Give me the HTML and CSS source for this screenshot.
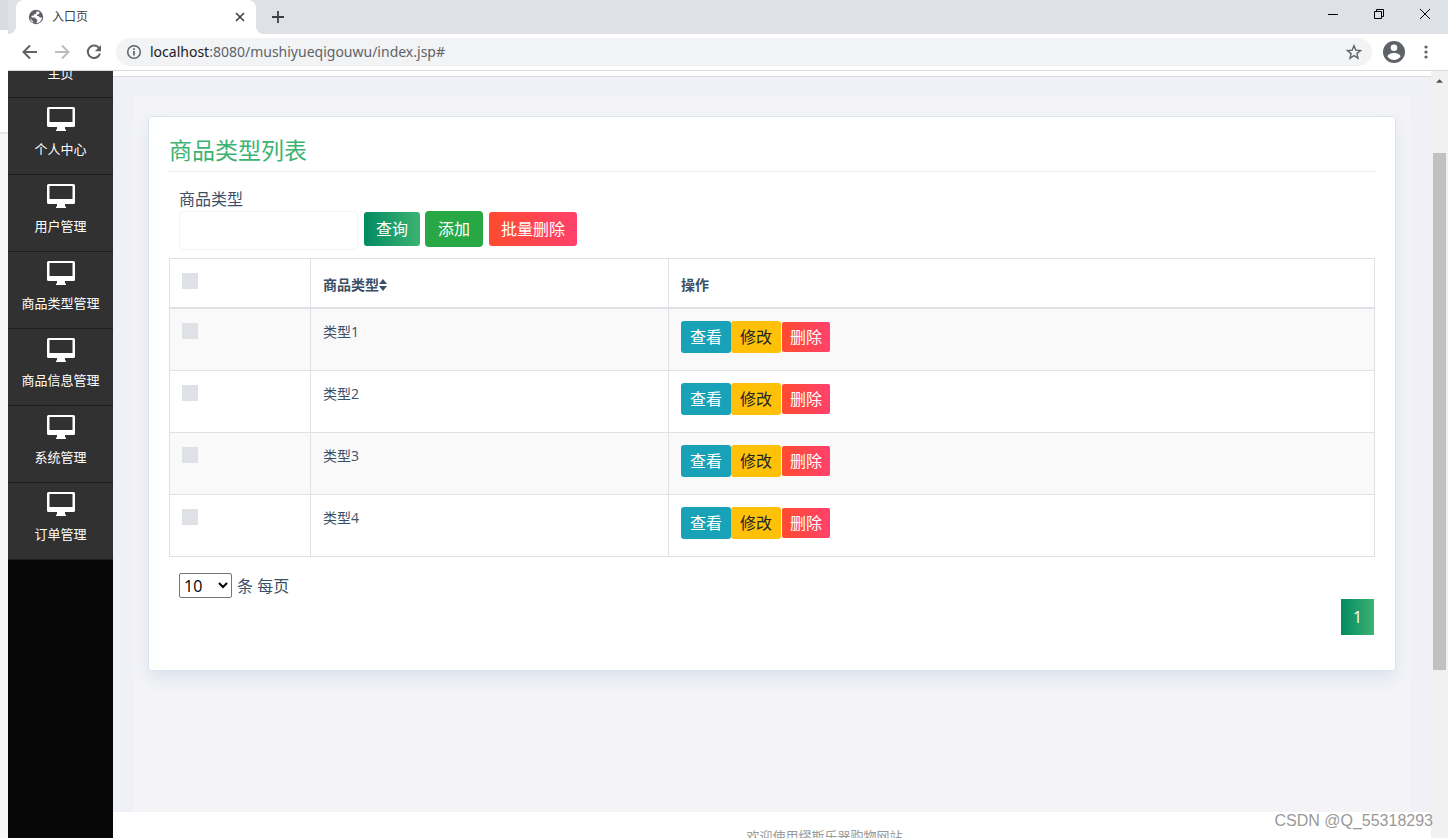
FILE: index.html
```html
<!DOCTYPE html>
<html lang="zh-CN">
<head>
<meta charset="utf-8">
<title>入口页</title>
<link rel="stylesheet" href="styles.css">
</head>
<body>
<svg class="defs" aria-hidden="true">
  <symbol id="monitor" viewBox="0 0 28 24">
    <path fill="currentColor" fill-rule="evenodd" d="M1.500 0h25A1.500 1.500 0 0 1 28 1.500v17a1.500 1.500 0 0 1-1.500 1.500H18v2l1 1v1H9v-1l1-1v-2H1.500A1.500 1.500 0 0 1 0 18.500v-17A1.500 1.500 0 0 1 1.500 0zM2.500 2v13h23V2z"/>
  </symbol>
</svg>
<div class="backdrop"><div class="backdrop-top"></div><div class="backdrop-page"></div><div class="backdrop-body"></div></div>
<div class="window">
  <header class="tabstrip">
    <div class="tab">
      <svg class="favicon" viewBox="0 0 16 16"><circle cx="8" cy="8" r="7.200" fill="#5f6368"/><path fill="#fff" d="M9.500 2.200c-1 .3-1.400 1-1.200 1.800.3.800-.6 1.200-1.600 1.200-.8 0-.9.500-.7 1.300H4.500L3 8c1 .8 2 .5 3.300.6 1.100.2 1.500.9 1.500 1.600h1.500l-.2 2.600-.9 1.200c3.200 0 5.600-2.500 5.700-5.600h-2.300c-.5-1.300-1.300-1.600-2.500-1.500l-.2-1.300c1.500 0 2.500-.5 2.500-1.600V3.200zM2.200 9.600l2.900 2.900.1 1.200C3.500 13 2.400 11.500 2.200 9.600z"/></svg>
      <span class="tab-title">入口页</span>
      <button class="icon-btn tab-close" aria-label="关闭标签页"><svg width="10" height="10" viewBox="0 0 10 10"><path d="M1 1l8 8M9 1L1 9" stroke="#3c4043" stroke-width="1.600"/></svg></button>
    </div>
    <button class="icon-btn new-tab" aria-label="新标签页"><svg width="12" height="12" viewBox="0 0 12 12"><path d="M6 0v12M0 6h12" stroke="#3c4043" stroke-width="1.800"/></svg></button>
    <div class="window-controls">
      <button class="icon-btn" aria-label="最小化"><svg width="10" height="10" viewBox="0 0 10 10"><path d="M0 5.500h10" stroke="#000"/></svg></button>
      <button class="icon-btn" aria-label="还原"><svg width="10" height="10" viewBox="0 0 10 10"><path d="M.5 2.500h7v7h-7zM2.500 2.500v-2h7v7h-2" fill="none" stroke="#000"/></svg></button>
      <button class="icon-btn" aria-label="关闭"><svg width="10" height="10" viewBox="0 0 10 10"><path d="M0 0l10 10M10 0L0 10" stroke="#000"/></svg></button>
    </div>
  </header>
  <div class="toolbar">
    <button class="icon-btn nav" aria-label="后退"><svg width="16" height="16" viewBox="0 0 16 16"><path d="M15 8H2M8 1.500L1.500 8 8 14.500" fill="none" stroke="#5f6368" stroke-width="2"/></svg></button>
    <button class="icon-btn nav" aria-label="前进"><svg width="16" height="16" viewBox="0 0 16 16"><path d="M1 8h13M8 1.500L14.500 8 8 14.500" fill="none" stroke="#babcbe" stroke-width="2"/></svg></button>
    <button class="icon-btn nav" aria-label="刷新"><svg width="16" height="16" viewBox="0 0 16 16"><path d="M13.300 4.500A6.200 6.200 0 1 0 14 9.500" fill="none" stroke="#5f6368" stroke-width="2"/><path d="M15 1v6.200H8.800z" fill="#5f6368"/></svg></button>
    <div class="address">
      <svg width="16" height="16" viewBox="0 0 16 16"><circle cx="8" cy="8" r="6.300" fill="none" stroke="#5f6368" stroke-width="1.500"/><path d="M8 7v4.500M8 4.300v1.700" stroke="#5f6368" stroke-width="1.700"/></svg>
      <span class="url"><span class="host">localhost</span>:8080/mushiyueqigouwu/index.jsp#</span>
      <button class="icon-btn star" aria-label="收藏"><svg width="16" height="16" viewBox="0 0 16 16"><path d="M8 1.800l1.800 4.300 4.700.4-3.600 3.100 1.100 4.600L8 11.700l-4 2.500 1.100-4.600-3.600-3.100 4.700-.4z" fill="none" stroke="#5f6368" stroke-width="1.400"/></svg></button>
    </div>
    <button class="icon-btn profile" aria-label="个人资料"><svg width="22" height="22" viewBox="0 0 22 22"><circle cx="11" cy="11" r="11" fill="#5f6368"/><circle cx="11" cy="6.700" r="3.300" fill="#fff"/><path d="M4.500 15.500c0-2.200 3.800-3.500 6.500-3.500s6.500 1.300 6.500 3.500C16 17.800 13.600 19 11 19s-5-1.200-6.500-3.500z" fill="#fff"/></svg></button>
    <button class="icon-btn menu" aria-label="菜单"><svg width="4" height="14" viewBox="0 0 4 14" fill="#5f6368"><circle cx="2" cy="2" r="1.600"/><circle cx="2" cy="7" r="1.600"/><circle cx="2" cy="12" r="1.600"/></svg></button>
  </div>
  <div class="viewport">
    <nav class="sidebar">
      <a class="side-item side-home" href="#">主页</a>
      <a class="side-item" href="#"><svg class="monitor"><use href="#monitor"/></svg>个人中心</a>
      <a class="side-item" href="#"><svg class="monitor"><use href="#monitor"/></svg>用户管理</a>
      <a class="side-item" href="#"><svg class="monitor"><use href="#monitor"/></svg>商品类型管理</a>
      <a class="side-item" href="#"><svg class="monitor"><use href="#monitor"/></svg>商品信息管理</a>
      <a class="side-item" href="#"><svg class="monitor"><use href="#monitor"/></svg>系统管理</a>
      <a class="side-item" href="#"><svg class="monitor"><use href="#monitor"/></svg>订单管理</a>
    </nav>
    <div class="page">
      <div class="page-top"></div>
      <main class="content">
        <div class="panel">
          <section class="card">
            <h1 class="card-title">商品类型列表</h1>
            <form class="search">
              <label class="search-label" for="type-name">商品类型</label>
              <div class="search-row">
                <input class="search-input" id="type-name" type="text">
                <button class="btn btn-query" type="button">查询</button>
                <button class="btn btn-add" type="button">添加</button>
                <button class="btn btn-danger" type="button">批量删除</button>
              </div>
            </form>
            <table class="list">
              <colgroup><col class="col-check"><col class="col-type"><col></colgroup>
              <thead>
                <tr><th><input class="check" type="checkbox" aria-label="全选"></th><th>商品类型<svg class="sort" viewBox="0 0 8 12"><path d="M4 0l4 5H0zM4 12L0 7h8z" fill="currentColor"/></svg></th><th>操作</th></tr>
              </thead>
              <tbody>
                <tr><td><input class="check" type="checkbox" aria-label="选择类型1"></td><td>类型1</td><td><div class="actions"><button class="sm sm-view">查看</button><button class="sm sm-edit">修改</button><button class="sm sm-del">删除</button></div></td></tr>
                <tr><td><input class="check" type="checkbox" aria-label="选择类型2"></td><td>类型2</td><td><div class="actions"><button class="sm sm-view">查看</button><button class="sm sm-edit">修改</button><button class="sm sm-del">删除</button></div></td></tr>
                <tr><td><input class="check" type="checkbox" aria-label="选择类型3"></td><td>类型3</td><td><div class="actions"><button class="sm sm-view">查看</button><button class="sm sm-edit">修改</button><button class="sm sm-del">删除</button></div></td></tr>
                <tr><td><input class="check" type="checkbox" aria-label="选择类型4"></td><td>类型4</td><td><div class="actions"><button class="sm sm-view">查看</button><button class="sm sm-edit">修改</button><button class="sm sm-del">删除</button></div></td></tr>
              </tbody>
            </table>
            <div class="page-size">
              <select class="size-select" id="size"><option>10</option><option>25</option></select>
              <label for="size">条 每页</label>
            </div>
            <div class="pager"><a class="page-link" href="#">1</a></div>
          </section>
        </div>
      </main>
      <footer class="footer">欢迎使用缪斯乐器购物网站</footer>
    </div>
    <div class="scrollbar"><svg class="scroll-up" viewBox="0 0 8 4"><path d="M4 0l4 4H0z" fill="#505050"/></svg><div class="thumb"></div></div>
  </div>
</div>
<div class="watermark">CSDN @Q_55318293</div>
</body>
</html>
```
FILE: styles.css
```css
* { box-sizing: border-box; }
body {
  margin: 0;
  height: 100vh;
  display: flex;
  overflow: hidden;
  background: #fff;
  color: #3b4f67;
  font: 16px/24px "Open Sans", "Noto Sans CJK SC", sans-serif;
}
button, input, select { font: inherit; }
a { text-decoration: none; }
.defs { position: absolute; width: 0; height: 0; }

.backdrop { width: 8px; display: flex; flex-direction: column; }
.backdrop-top { height: 30px; background: #d9dce1; }
.backdrop-page { height: 102px; background: #fff; }
.backdrop-body { flex: 1; background: #f5f7f9; border-top: 2px solid #e4e6e8; }

.window { flex: 1; min-width: 0; display: flex; flex-direction: column; }
.icon-btn {
  display: flex;
  align-items: center;
  justify-content: center;
  padding: 0;
  border: 0;
  background: none;
}
.tabstrip { height: 34px; flex: none; display: flex; align-items: center; padding-left: 8px; background: #dee1e6; }
.tab {
  position: relative;
  width: 240px;
  height: 34px;
  display: flex;
  align-items: center;
  padding: 0 11px 0 12px;
  background: #fff;
  border-radius: 8px 8px 0 0;
}
.tab::before, .tab::after { content: ""; position: absolute; bottom: 0; width: 8px; height: 8px; }
.tab::before { left: -8px; background: radial-gradient(circle at 0 0, #dee1e6 8px, #fff 8px); }
.tab::after { right: -8px; background: radial-gradient(circle at 100% 0, #dee1e6 8px, #fff 8px); }
.favicon { width: 16px; height: 16px; margin-right: 8px; }
.tab-title { flex: 1; font-size: 12px; color: #3c4043; }
.new-tab { margin-left: 16px; }
.window-controls { display: flex; align-self: flex-start; margin-left: auto; }
.window-controls .icon-btn { width: 46px; height: 28px; }

.toolbar { height: 37px; flex: none; display: flex; align-items: center; padding: 0 20px 0 14px; background: #fff; border-bottom: 1px solid #d8dadd; }
.nav { width: 16px; margin-right: 16px; }
.nav:nth-child(3) { margin-right: 14px; }
.address {
  flex: 1;
  height: 28px;
  display: flex;
  align-items: center;
  gap: 8px;
  padding: 0 10px;
  border-radius: 14px;
  background: #f1f3f4;
}
.url { flex: 1; font-family: "Noto Sans", sans-serif; font-size: 14px; color: #5f6368; }
.host { color: #202124; }
.profile { margin: 0 19px 0 11px; }

.viewport { flex: 1; min-height: 0; display: flex; overflow: hidden; }
.sidebar { width: 105px; flex: none; background: #070707; }
.side-item {
  height: 77px;
  display: flex;
  flex-direction: column;
  align-items: center;
  padding-top: 9px;
  background: #313131;
  border-bottom: 1px solid #1d1d1d;
  color: #fff;
  font-size: 13px;
  line-height: 20px;
}
.side-home { height: 27px; padding: 0 0 14px; justify-content: flex-end; overflow: hidden; }
.monitor { width: 28px; height: 24px; margin-bottom: 8px; }

.page { flex: 1; min-width: 0; display: flex; flex-direction: column; }
.page-top { height: 6px; flex: none; background: #fff; border-bottom: 1px solid #d9dbdd; }
.content { flex: none; padding: 19px 20px 0; background: #f0f1f6; }
.panel { padding: 20px 15px 141px; background: #f4f4f7; }
.card {
  padding: 19px 20px 35px;
  background: #fff;
  border: 1px solid #dae3ee;
  border-radius: 3px;
  box-shadow: 0 8px 16px #dde3ed;
}
.card-title {
  margin: 0 0 16px;
  padding-bottom: 7px;
  border-bottom: 1px solid #eaecee;
  color: #3cb371;
  font-size: 23px;
  font-weight: 400;
  line-height: 28px;
}
.search { padding: 0 10px; }
.search-label { display: block; line-height: 23px; }
.search-row { display: flex; align-items: center; height: 39px; }
.search-input { width: 179px; height: 39px; margin-right: 6px; padding: 6px 12px; border: 1px solid #f2f3f5; border-radius: 4px; background: #fff; }
.btn { height: 34px; margin: 0 6px 4px 0; padding: 0 12px; border: 0; border-radius: 3px; color: #fff; }
.btn-query { margin-right: 5px; background: linear-gradient(90deg, #038a62, #3cb371); }
.btn-add { height: 36px; padding: 0 13px; border-radius: 4px; background: #28a745; }
.btn-danger, .sm-del { background: linear-gradient(90deg, #ff4b2f, #ff416c); }

.list { width: 100%; margin-top: 8px; border-collapse: collapse; table-layout: fixed; font-size: 14px; line-height: 22px; }
.col-check { width: 141px; }
.col-type { width: 358px; }
.list th, .list td { padding: 12px; border: 1px solid #dee2e6; text-align: left; vertical-align: top; }
.list th { height: 49px; padding-top: 15px; padding-bottom: 8px; border-bottom-width: 2px; font-weight: 700; }
.list th:first-child { padding-top: 14px; }
.list td { height: 62px; }
.list tbody tr:first-child td { height: 63px; }
.list td:first-child { padding-top: 14px; }
.list tbody tr:nth-child(odd) { background: #f9f9f9; }
.check { appearance: none; display: block; width: 16px; height: 16px; margin: 0; background: #dee2e6; }
.sort { width: 8px; height: 12px; vertical-align: -1px; }
.actions { display: flex; align-items: center; }
.sm { height: 32px; padding: 0 9px; border: 0; border-radius: 3px; color: #fff; line-height: 24px; font-size: 16px; }
.sm-view { background: #17a2b8; }
.sm-edit { background: #ffc107; color: #212529; }
.sm-del { height: 30px; margin-left: 1px; padding: 0 8px; border-radius: 2px; }

.page-size { display: flex; align-items: center; gap: 5px; margin-top: 16px; padding-left: 10px; }
.size-select { width: 53px; height: 25px; padding: 0; border: 1px solid #767676; border-radius: 2px; background: #fff; color: #000; }
.pager { display: flex; justify-content: flex-end; margin: 1px 1px 0 0; }
.page-link { width: 33px; height: 36px; line-height: 36px; text-align: center; color: #fff; background: linear-gradient(90deg, #038a62, #3cb371); }
.footer { flex: 1; min-height: 0; padding: 14px 0 0 105px; overflow: hidden; background: #fff; color: #999; font-size: 13px; line-height: 20px; text-align: center; }

.scrollbar { width: 17px; flex: none; display: flex; flex-direction: column; padding: 8px 2px 0; background: #f1f1f1; }
.scroll-up { width: 7px; height: 4px; margin: 0 3px 70px; }
.thumb { height: 517px; background: #c1c1c1; }
.watermark { position: absolute; right: 15px; bottom: 5px; color: #999; font: 16px/24px "Liberation Sans", Arial, sans-serif; }
```
